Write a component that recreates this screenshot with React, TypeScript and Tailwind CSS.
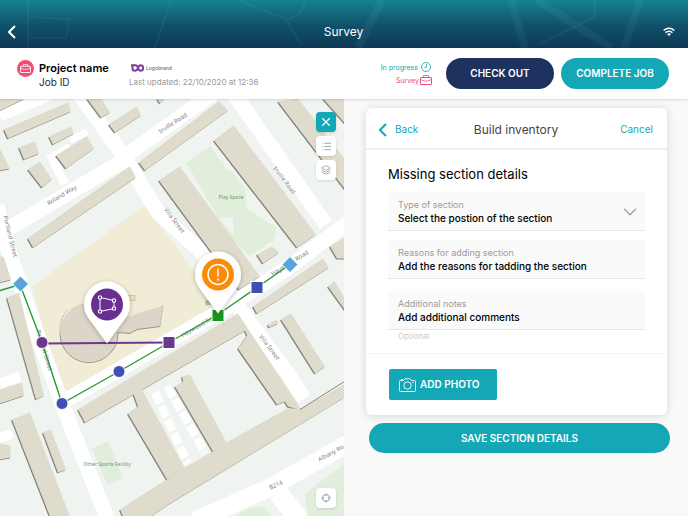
import { ChevronDown, Layers, List, X } from "lucide-react"

const buildings = [
  "0,98 25,98 0,110",
  "4,129 68,102 71,111 8,138",
  "49,136 71,126 74,133 53,144",
  "19,147 35,141 39,153 24,159",
  "56,155 87,136 94,148 66,168",
  "28,169 40,161 52,179 42,187",
  "0,148 10,168 0,170",
  "28,238 130,166 136,177 33,247",
  "87,98 101,98 110,112 101,117",
  "109,124 137,106 141,115 115,132",
  "157,98 165,98 160,103",
  "139,162 219,101 228,110 145,170",
  "159,180 180,166 260,276 239,289",
  "214,140 234,125 316,234 297,247",
  "278,101 298,98 346,160 346,190",
  "323,98 346,98 346,124",
  "257,254 272,246 279,252 263,263",
  "253,306 323,258 329,267 257,313",
  "330,246 346,236 346,258 337,258",
  "328,286 335,281 346,300 346,311",
  "281,319 291,313 325,366 315,373",
  "268,324 277,319 278,323 269,327",
  "12,419 30,412 70,516 50,516",
  "43,432 51,429 66,469 58,472",
  "0,389 22,382 24,395 0,403",
  "7,297 19,292 44,395 36,399",
  "0,255 4,257 11,279 0,282",
  "0,443 10,445 11,457 0,459",
]

// one connected block, drawn as overlapping wings
const block = [
  "78,409 238,313 247,329 85,422",
  "238,348 247,335 238,313 302,410 288,406 285,401 277,404",
  "128,413 138,406 133,392 141,387 185,468 167,479",
  "175,386 183,381 182,376 190,374 227,443 213,451",
  "120,509 167,479 182,469 213,451 225,443 288,408 302,408 346,383 346,396 170,503 148,518 124,518",
]

const streets = [
  { name: "Inville Road", x: 173, y: 123, angle: -33 },
  { name: "Inville Road", x: 284, y: 180, angle: 53 },
  { name: "Roland Way", x: 62, y: 195, angle: -31 },
  { name: "Portland Street", x: 10, y: 236, angle: 76 },
  { name: "Portland Street", x: 44, y: 350, angle: 73 },
  { name: "Villa Street", x: 174, y: 220, angle: 53 },
  { name: "Villa Street", x: 269, y: 347, angle: 53 },
  { name: "Haywood Road", x: 200, y: 325, angle: -30 },
  { name: "Haywood Road", x: 290, y: 263, angle: -32 },
  { name: "B214", x: 276, y: 485, angle: -24 },
  { name: "Albany Ro", x: 331, y: 453, angle: -29 },
]

function SurveyMap() {
  return (
    <svg viewBox="0 98 344 418" preserveAspectRatio="xMidYMid slice" className="absolute inset-0 h-full w-full" role="img" aria-label="Map of the survey area">
      <defs>
        <filter id="pin" x="-50%" y="-50%" width="200%" height="200%">
          <feDropShadow dx="0" dy="1" stdDeviation="2" floodOpacity="0.3" />
        </filter>
      </defs>
      <rect x="0" y="98" width="344" height="418" fill="#eff4f0" />

      <g fill="#e0eedb">
        <polygon points="186,162 211,145 218,158 224,163 225,169 233,172 245,188 246,208 277,227 273,240 250,255 226,234 218,217" />
        <polygon points="92,448 108,441 123,478 107,484" />
        <polygon points="305,493 346,462 346,518 308,518" />
        <polygon points="232,517 250,507 262,506 273,517" />
      </g>
      <polygon points="145,205 213,296 213,306 66,391 58,384 32,286" fill="#f1ecd5" />
      <path d="M218 217l15 0 1 18z" fill="#eff4f0" />

      <g fill="none" stroke="#fff" strokeWidth="15">
        <path d="M0 115L52 93" strokeWidth="12" />
        <path d="M78 90L84 100 126 159 158 212 200 250 243 313 287 372 304 398" />
        <path d="M126 155L220 88" />
        <path d="M233 92L326 224" />
        <path d="M122 161L0 233" />
        <path d="M-3 205L7 246 20 283 40 342 62 403 108 520" />
        <path d="M62 402L218 312 290 266 348 222" />
        <path d="M195 520L270 487 348 443" strokeWidth="18" />
        <path d="M278 492L300 520" strokeWidth="20" />
        <path d="M70 147L52 157 65 184" strokeWidth="9" />
        <path d="M87 131L70 140" strokeWidth="7" />
        <path d="M0 437L8 435" strokeWidth="10" strokeLinecap="round" />
        <path d="M0 383L20 376" strokeWidth="10" />
      </g>
      <g fill="none" stroke="#fff" strokeWidth="8" strokeDasharray="12 3">
        <path d="M155 392L188 463" />
        <path d="M167 386L205 452" />
      </g>

      <g fill="#85837a">
        {[...buildings, ...block].map((points) => (
          <polygon key={points} points={points} transform="translate(-1 1)" />
        ))}
      </g>
      <g fill="#dfdccd">
        {[...buildings, ...block].map((points) => (
          <polygon key={points} points={points} />
        ))}
      </g>
      <path d="M288 376L302 392" stroke="#fff" strokeWidth="8" strokeLinecap="round" />
      <path d="M300 409L346 380" stroke="#85837a" />
      <path d="M128 295h7v5h-7z M130 300v-6" fill="#e9e3bb" stroke="#cfc894" />
      <path d="M205 301l5-3 2 6-6 1z" fill="#b9b5a5" />

      <path d="M68 312A29 29 0 1 0 118 332L130 333 137 329 160 326 163 305 122 318 100 305Q78 299 68 312Z" fill="#dbd6c7" />
      <path d="M60 334A29 29 0 0 0 118 332L130 333 137 329 160 326" fill="none" stroke="#99958a" />
      <path d="M160 326L163 305M60 334Q59 318 68 309" fill="none" stroke="#b5b0a3" strokeDasharray="2 1" />

      <g fontFamily="'Noto Sans', sans-serif" textAnchor="middle">
        <g fontSize="6" fill="#7c7e83" stroke="#fff" strokeWidth="1" paintOrder="stroke">
          {streets.map((s) => (
            <text key={`${s.x}-${s.y}`} transform={`translate(${s.x} ${s.y}) rotate(${s.angle})`} dominantBaseline="middle">
              {s.name}
            </text>
          ))}
        </g>
        <g fontSize="5" fill="#6f9967">
          <text x="231" y="198">Play Space</text>
          <text x="107" y="465">Other Sports Facility</text>
        </g>
      </g>

      <path d="M0 290L20 284 42 342 62 403 119 371 169 342 218 314 257 287 290 264" fill="none" stroke="#269a32" strokeWidth="1.4" />
      <path d="M42 343L169 342" stroke="#6a388f" strokeWidth="2" />
      <g stroke="#fff" strokeWidth="1">
        <path d="M20.500 275.500l8 8-8 8-8-8z" fill="#59a4de" />
        <path d="M290 256l8 8-8 8-8-8z" fill="#59a4de" />
        <circle cx="42" cy="342" r="6" fill="#6a388f" />
        <circle cx="62" cy="403" r="6" fill="#404fb4" />
        <circle cx="119" cy="371" r="6" fill="#404fb4" />
        <rect x="163" y="336" width="12" height="12" fill="#6a388f" />
        <rect x="251" y="281" width="12" height="12" fill="#404fb4" />
        <rect x="212" y="309" width="12" height="12" fill="#149820" />
      </g>

      <g transform="translate(107 304)">
        <path d="M0 39L-19 13A23 23 0 1 1 19 13Z" fill="#fff" filter="url(#pin)" />
        <circle r="16" fill="#6a2e91" />
        <g fill="#6a2e91" stroke="#fff">
          <path d="M-7-7L7-4V4L-7 7Z" />
          <path d="M-8.500-8.500h3v3h-3zM5.500-5.500h3v3h-3zM5.500 2.500h3v3h-3zM-8.500 5.500h3v3h-3z" />
        </g>
      </g>
      <g transform="translate(218 274)">
        <path d="M0 39L-19 13A23 23 0 1 1 19 13Z" fill="#fff" filter="url(#pin)" />
        <circle r="16" fill="#fa8b06" />
        <circle r="10" fill="none" stroke="#fff" strokeWidth="1.500" />
        <path d="M0-6V2M0 4V6" stroke="#fff" strokeWidth="1.500" />
      </g>
    </svg>
  )
}

function Briefcase({ className }: { className?: string }) {
  return (
    <svg viewBox="0 0 12 10" fill="none" stroke="currentColor" className={className} aria-hidden="true">
      <rect x="0.500" y="2.500" width="11" height="7" rx="0.500" />
      <path d="M3.500 2.500V0.500H8.500V2.500M0.500 4.500L4.500 6H7.500L11.500 4.500" strokeWidth="0.800" />
    </svg>
  )
}

function BackArrow() {
  return (
    <svg viewBox="0 0 8 14" className="h-[14px] w-2" fill="none" stroke="currentColor" strokeWidth="2" aria-hidden="true">
      <path d="M7 1L1 7L7 13" />
    </svg>
  )
}

const mapButton = "flex size-5 items-center justify-center rounded bg-white text-gray-400 shadow"
const field = "flex flex-col justify-center border-b border-gray-200 bg-[#fafafa] h-[39px] px-[10px] pt-[2px]"
const fieldLabel = "text-[9px] leading-3 text-[#9a9a9a]"
const fieldInput = "w-full appearance-none bg-transparent p-0 text-[10px] leading-[14px] font-medium text-black placeholder:text-black placeholder:opacity-100 outline-none"

export default function App() {
  return (
    <div className="flex min-h-screen flex-col bg-[#f9f9f9] font-['Inter',sans-serif]">
      <header className="relative flex h-12 items-center justify-between bg-gradient-to-b from-[#15838f] via-[#0f5068] via-55% to-[#0e3955] px-2 pt-4 text-white">
        <svg viewBox="0 0 688 48" preserveAspectRatio="none" className="absolute inset-0 h-full w-full" fill="none" stroke="#8fd0dc" strokeOpacity="0.07" strokeWidth="2" aria-hidden="true">
          <path d="M28 0V48M30 17L69 19 66 38H30M171 0L155 48M238 0L286 19 302 46M286 19Q300 18 306 0M540 44L595 17V0" />
          <path d="M382 0L358 48M511 0L525 48M536 0L612 48M640 0L624 48" strokeWidth="8" />
        </svg>
        <button aria-label="Back" className="relative">
          <BackArrow />
        </button>
        <h1 className="relative pl-2 text-xs leading-4">Survey</h1>
        <svg viewBox="0 0 12 10" className="relative mr-[5px] h-[10px] w-3" fill="none" stroke="currentColor" strokeWidth="1.600" role="img" aria-label="Wi-Fi">
          <path d="M0.600 3.500Q6-1 11.400 3.500M2.500 5.600Q6 2.800 9.500 5.600" />
          <path d="M4 7Q6 5.400 8 7L6 9Z" fill="currentColor" stroke="none" />
        </svg>
      </header>

      <section className="z-10 flex h-[51px] items-center bg-white pr-[19px] pl-[17px] shadow">
        <div className="flex w-28 gap-[5px]">
          <span className="flex size-[17px] shrink-0 items-center justify-center rounded-full bg-[#f34b73] text-white">
            <Briefcase className="h-[9px] w-[11px]" />
          </span>
          <div className="whitespace-nowrap">
            <h2 className="text-[11px] leading-4 font-semibold text-black">Project name</h2>
            <p className="text-[10px] leading-3 text-gray-800">Job ID</p>
          </div>
        </div>
        <div className="whitespace-nowrap">
          <div className="flex items-center gap-[2px] pl-[2px]">
            <svg viewBox="0 0 13 8" className="h-2 w-[13px]" fill="none" stroke="#7d3b9c" strokeWidth="2" aria-hidden="true">
              <path d="M0 1.200H5M1.500 1V4.500Q1.500 6.700 4 6.700Q6 6.700 7 4Q7.800 1.200 9.500 1.200A2.700 2.700 0 0 1 9.500 6.700Q7.800 6.700 7 4Q6.500 2 5 1.200" />
            </svg>
            <span className="text-[5px] leading-4 font-medium text-gray-500">Logobrand</span>
          </div>
          <p className="text-[8px] leading-3 text-[#999]">Last updated: 22/10/2020 at 12:36</p>
        </div>
        <div className="ml-auto flex flex-col items-end text-[7px] leading-[13px]">
          <span className="flex items-center gap-[3px] text-[#12a5b4]">
            In progress
            <svg viewBox="0 0 12 12" className="mr-px size-[10px]" fill="none" stroke="currentColor" aria-hidden="true">
              <circle cx="6" cy="6" r="5.400" />
              <path d="M6.500 2.500V6.500H4" />
            </svg>
          </span>
          <span className="flex items-center gap-px text-[#f34b73]">
            Survey
            <Briefcase className="h-[10px] w-3" />
          </span>
        </div>
        <button className="ml-[14px] h-[31px] w-[108px] rounded-full bg-[#1e3260] text-[10px] font-semibold text-white">CHECK OUT</button>
        <button className="ml-[7px] h-[31px] w-[108px] rounded-full bg-[#14a7b6] text-[10px] font-semibold text-white">COMPLETE JOB</button>
      </section>

      <main className="grid flex-1 grid-cols-2">
        <section className="relative overflow-hidden">
          <SurveyMap />
          <div className="absolute top-[13px] right-2 flex flex-col gap-1">
            <button aria-label="Close" className="flex size-5 items-center justify-center rounded bg-[#14a7b6] text-white shadow">
              <X className="size-[14px]" strokeWidth={2} />
            </button>
            <button aria-label="List" className={mapButton}>
              <List className="size-[11px]" />
            </button>
            <button aria-label="Layers" className={mapButton}>
              <Layers className="size-[10px]" />
            </button>
          </div>
          <button aria-label="My location" className={`${mapButton} absolute right-2 bottom-2`}>
            <svg viewBox="0 0 10 10" className="size-[10px]" fill="none" stroke="currentColor" aria-hidden="true">
              <circle cx="5" cy="5" r="3.500" />
              <path d="M5 0.500V3M5 7V9.500M0.500 5H3M7 5H9.500" />
            </svg>
          </button>
        </section>

        <form className="pt-[9px] pr-[18px] pl-[22px]">
          <div className="mr-[3px] rounded-md bg-white shadow-[0_1px_10px_rgba(0,0,0,0.14)]">
            <div className="grid h-[42px] grid-cols-3 items-center border-b-2 border-[#f0f0f0] pt-[3px] pr-[14px] pl-[13px] text-[10px] text-[#14a7b6]">
              <button type="button" className="flex items-center gap-2">
                <BackArrow />
                Back
              </button>
              <h2 className="text-center text-xs whitespace-nowrap text-[#444]">Build inventory</h2>
              <button type="button" className="justify-self-end">Cancel</button>
            </div>

            <div className="border-b border-gray-100 px-[22px] pt-[15px] pb-[11px]">
              <h3 className="mb-[9px] text-[13px] leading-[18px] text-black">Missing section details</h3>
              <div className={`${field} relative`}>
                <label htmlFor="type" className={fieldLabel}>Type of section</label>
                <select id="type" className={fieldInput}>
                  <option>Select the postion of the section</option>
                </select>
                <ChevronDown className="pointer-events-none absolute right-1 size-[22px] text-gray-400" strokeWidth={1.5} />
              </div>
              <div className={`${field} mt-[9px]`}>
                <label htmlFor="reasons" className={fieldLabel}>Reasons for adding section</label>
                <input id="reasons" placeholder="Add the reasons for tadding the section" className={fieldInput} />
              </div>
              <div className={`${field} mt-3`}>
                <label htmlFor="notes" className={fieldLabel}>Additional notes</label>
                <input id="notes" placeholder="Add additional comments" aria-describedby="notes-hint" className={fieldInput} />
              </div>
              <p id="notes-hint" className="pl-[10px] text-[8px] leading-3 text-[#ccc]">Optional</p>
            </div>

            <div className="px-[23px] py-[15px]">
              <button type="button" className="flex h-[31px] w-[108px] items-center gap-1 rounded-xs bg-[#14a7b6] pl-[10px] text-[10px] font-semibold whitespace-nowrap text-white">
                <svg viewBox="0 0 17 14" className="h-[14px] w-[17px] shrink-0" fill="none" stroke="currentColor" strokeWidth="0.900" aria-hidden="true">
                  <path d="M1.500 2.500H4.500L6 0.800H11L12.500 2.500H15.500Q16.500 2.500 16.500 3.500V12.500Q16.500 13.500 15.500 13.500H1.500Q0.500 13.500 0.500 12.500V3.500Q0.500 2.500 1.500 2.500Z" />
                  <circle cx="8.500" cy="7.500" r="3.700" />
                  <path d="M13 4.500H14.500M2 1.500H4" />
                </svg>
                ADD PHOTO
              </button>
            </div>
          </div>
          <button type="submit" className="mt-2 ml-[3px] block h-[30px] w-[calc(100%-3px)] rounded-full bg-[#14a7b6] text-[10px] font-semibold text-white">SAVE SECTION DETAILS</button>
        </form>
      </main>
    </div>
  )
}
